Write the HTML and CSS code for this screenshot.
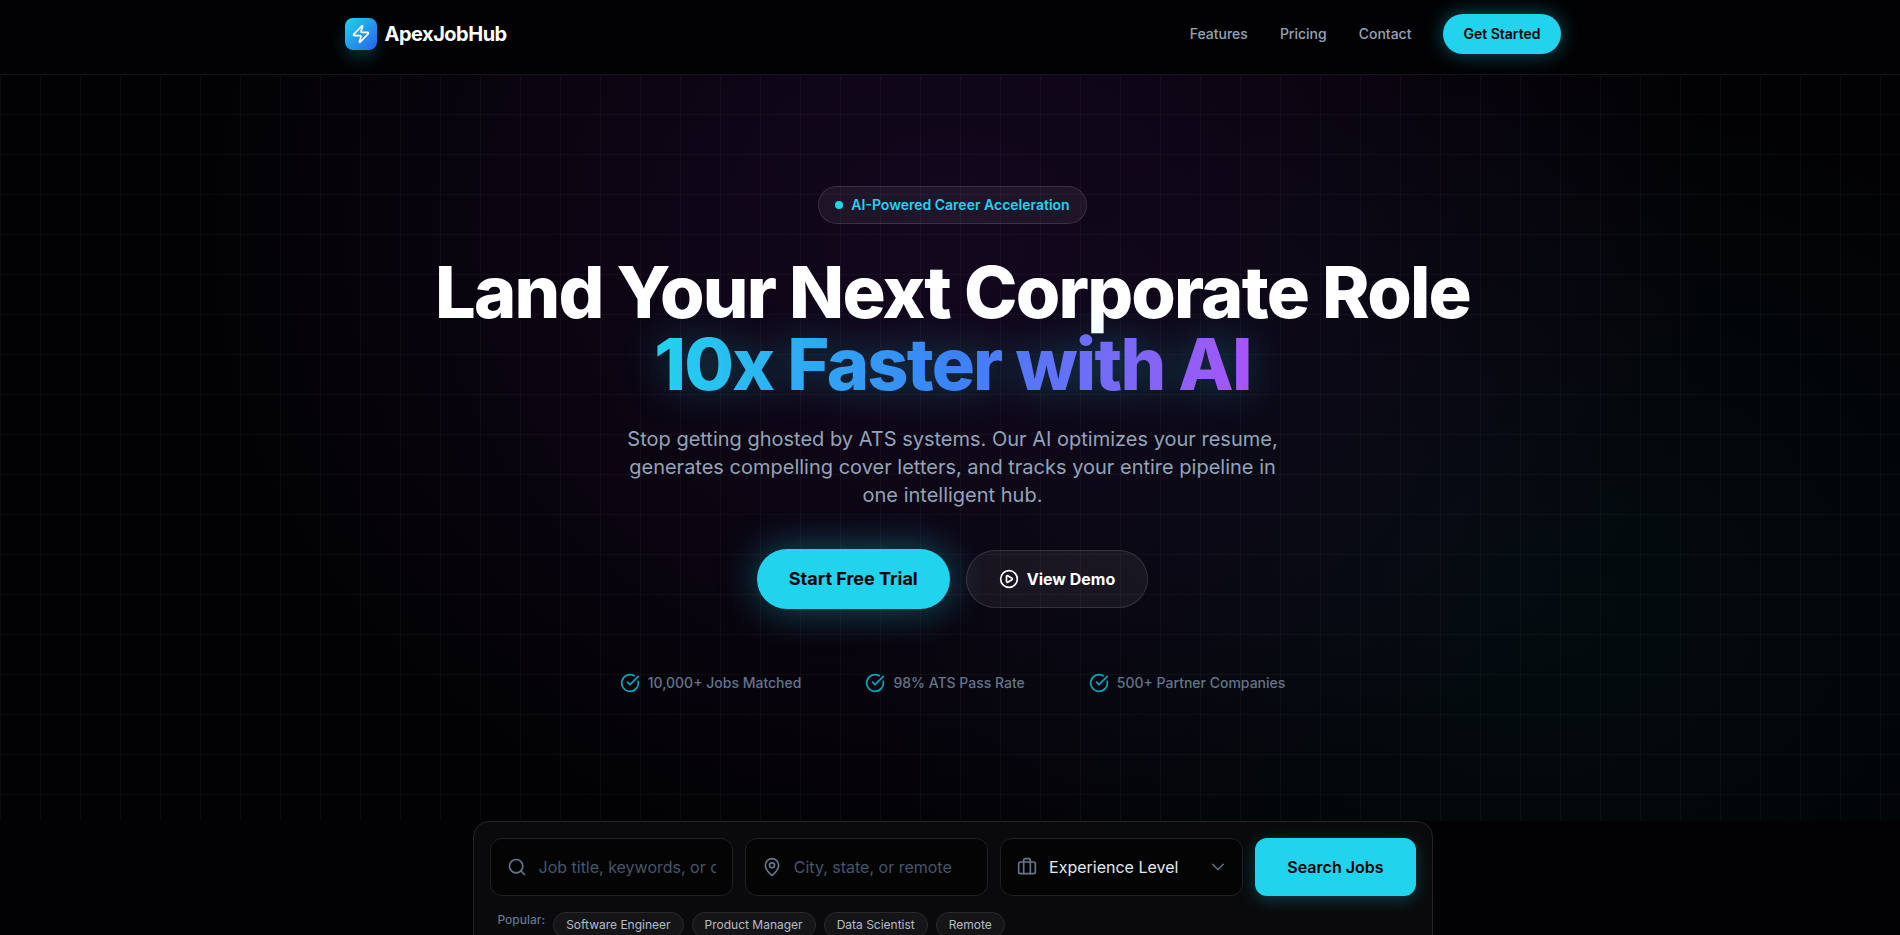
FILE: index.html
```html
<!DOCTYPE html>
<html lang="en">
<head>
  <meta charset="UTF-8" />
  <meta name="viewport" content="width=device-width, initial-scale=1.0"/>
  <title>ApexJobHub</title>
  <link rel="stylesheet" href="styles.css">
</head>
<body>
  <div class="page">
    <header class="header">
      <nav class="nav">
        <a class="logo" href="#">
          <span class="logo-mark">
            <svg class="icon" viewBox="0 0 24 24"><path d="M4 14a1 1 0 0 1-.78-1.63l9.9-10.2a.5.5 0 0 1 .86.46l-1.92 6.02A1 1 0 0 0 13 10h7a1 1 0 0 1 .78 1.63l-9.9 10.2a.5.5 0 0 1-.86-.46l1.92-6.02A1 1 0 0 0 11 14z"/></svg>
          </span>
          ApexJobHub
        </a>
        <div class="nav-links">
          <a href="#features">Features</a>
          <a href="#pricing">Pricing</a>
          <a href="#contact">Contact</a>
          <button class="btn btn-small" type="button">Get Started</button>
        </div>
      </nav>
    </header>

    <main>
      <section class="hero">
        <div class="badge"><span class="badge-dot"></span>AI-Powered Career Acceleration</div>
        <h1 class="hero-title">Land Your Next Corporate Role<br><span class="gradient-text">10x Faster with AI</span></h1>
        <p class="hero-text">Stop getting ghosted by ATS systems. Our AI optimizes your resume, generates compelling cover letters, and tracks your entire pipeline in one intelligent hub.</p>

        <div class="hero-actions">
          <button class="btn btn-large" type="button">Start Free Trial</button>
          <button class="btn btn-glass" type="button">
            <svg class="icon" viewBox="0 0 24 24"><circle cx="12" cy="12" r="10"/><path d="M9 9.003a1 1 0 0 1 1.517-.859l4.997 2.997a1 1 0 0 1 0 1.718l-4.997 2.997A1 1 0 0 1 9 14.996z"/></svg>
            View Demo
          </button>
        </div>

        <ul class="stats">
          <li>
            <svg class="icon" viewBox="0 0 24 24"><path d="M21.801 10A10 10 0 1 1 17 3.335"/><path d="m9 11 3 3L22 4"/></svg>
            10,000+ Jobs Matched
          </li>
          <li>
            <svg class="icon" viewBox="0 0 24 24"><path d="M21.801 10A10 10 0 1 1 17 3.335"/><path d="m9 11 3 3L22 4"/></svg>
            98% ATS Pass Rate
          </li>
          <li>
            <svg class="icon" viewBox="0 0 24 24"><path d="M21.801 10A10 10 0 1 1 17 3.335"/><path d="m9 11 3 3L22 4"/></svg>
            500+ Partner Companies
          </li>
        </ul>
      </section>

      <section class="search-card">
        <form class="search-form">
          <label class="field">
            <svg class="icon" viewBox="0 0 24 24"><circle cx="11" cy="11" r="8"/><path d="m21 21-4.34-4.34"/></svg>
            <input type="text" placeholder="Job title, keywords, or company" aria-label="Job title">
          </label>
          <label class="field">
            <svg class="icon" viewBox="0 0 24 24"><path d="M20 10c0 4.993-5.539 10.193-7.399 11.799a1 1 0 0 1-1.202 0C9.539 20.193 4 14.993 4 10a8 8 0 0 1 16 0"/><circle cx="12" cy="10" r="3"/></svg>
            <input type="text" placeholder="City, state, or remote" aria-label="Location">
          </label>
          <label class="field">
            <svg class="icon" viewBox="0 0 24 24"><path d="M16 20V4a2 2 0 0 0-2-2h-4a2 2 0 0 0-2 2v16"/><rect x="2" y="6" width="20" height="14" rx="2"/></svg>
            <select aria-label="Experience level">
              <option>Experience Level</option>
              <option>Entry Level</option>
              <option>Mid Level</option>
              <option>Senior</option>
            </select>
            <svg class="icon chevron" viewBox="0 0 24 24"><path d="m4 8 8 8 8-8"/></svg>
          </label>
          <button class="btn btn-search" type="submit">Search Jobs</button>
        </form>

        <div class="popular">
          <span>Popular:</span>
          <button class="chip" type="button">Software Engineer</button>
          <button class="chip" type="button">Product Manager</button>
          <button class="chip" type="button">Data Scientist</button>
          <button class="chip" type="button">Remote</button>
        </div>
      </section>
    </main>
  </div>
</body>
</html>
```

FILE: styles.css
```css
* { box-sizing: border-box; }
body { margin: 0; background: #020204; color: #fff; font-family: Inter, "Liberation Sans", sans-serif; font-size: 16px; line-height: 24px; overflow-x: hidden; }
a { color: inherit; text-decoration: none; }
button, input, select { font: inherit; }
button { cursor: pointer; }

/* the page runs on under the edge of the scrollbar */
.page { margin-right: -5px; }

.icon { width: 20px; height: 20px; flex: none; fill: none; stroke: currentColor; stroke-width: 2; stroke-linecap: round; stroke-linejoin: round; }

/* Header */
.header { border-bottom: 1px solid #151518; background: #020204; }
.nav { display: flex; justify-content: space-between; align-items: center; max-width: 1280px; margin: 0 auto; padding: 14px 32px 20px; }
.logo { display: flex; align-items: center; gap: 8px; font-size: 20px; font-weight: 700; letter-spacing: -0.025em; }
.logo-mark { display: flex; align-items: center; justify-content: center; width: 32px; height: 32px; border-radius: 8px; background: linear-gradient(135deg, #22d3ee, #2563eb); box-shadow: 0 8px 16px rgba(34, 211, 238, 0.2); }
.nav-links { display: flex; align-items: center; gap: 32px; color: #94a3b8; font-size: 14px; font-weight: 500; }

/* Buttons */
.btn { display: flex; align-items: center; justify-content: center; gap: 8px; border: 0; border-radius: 999px; background: #22d3ee; color: #020204; font-weight: 700; }
.btn-small { height: 40px; padding: 0 20px; font-size: 14px; font-weight: 600; box-shadow: 0 0 20px rgba(34, 211, 238, 0.4); }
.btn-large { height: 60px; padding: 0 32px; font-size: 18px; box-shadow: 0 0 40px rgba(34, 211, 238, 0.4); }
.btn-glass { height: 58px; padding: 0 32px; border: 1px solid rgba(255, 255, 255, 0.12); background: rgba(255, 255, 255, 0.06); color: #fff; }
.btn-search { padding: 0 32px; border-radius: 12px; font-weight: 600; box-shadow: 0 4px 16px rgba(34, 211, 238, 0.25); }

/* Hero */
.hero {
  display: flex; flex-direction: column; align-items: center; padding: 111px 32px 128px; text-align: center;
  background:
    linear-gradient(to right, rgba(255, 255, 255, 0.03) 1px, transparent 1px) 0 0 / 40px 40px,
    linear-gradient(to bottom, rgba(255, 255, 255, 0.03) 1px, transparent 1px) 0 -1px / 40px 40px,
    radial-gradient(ellipse 760px 640px at 50% 22%, rgba(88, 28, 135, 0.2), rgba(88, 28, 135, 0.11) 50%, transparent),
    radial-gradient(ellipse 680px 520px at 80% 70%, rgba(14, 95, 110, 0.1), transparent);
}
.badge { display: flex; align-items: center; gap: 8px; height: 38px; padding: 0 16px; border: 1px solid rgba(255, 255, 255, 0.12); border-radius: 999px; background: rgba(255, 255, 255, 0.06); color: #22d3ee; font-size: 14px; font-weight: 600; }
.badge-dot { width: 8px; height: 8px; border-radius: 50%; background: #22d3ee; }
.hero-title { margin: 32px 0 25px; font-size: 72px; line-height: 72px; font-weight: 800; letter-spacing: -0.025em; }
.gradient-text { background: linear-gradient(to right, #22d3ee, #3b82f6, #a855f7); -webkit-background-clip: text; background-clip: text; color: transparent; filter: drop-shadow(0 0 20px rgba(34, 211, 238, 0.3)); }
.hero-text { max-width: 672px; margin: 0 0 40px; color: #94a3b8; font-size: 20px; line-height: 28px; }
.hero-actions { display: flex; align-items: center; gap: 16px; }
.stats { display: flex; gap: 64px; margin: 64px 0 0; padding: 0; list-style: none; color: #64748b; font-size: 14px; line-height: 20px; font-weight: 500; }
.stats li { display: flex; align-items: center; gap: 8px; }
.stats .icon { color: #0da5bd; }

/* Search */
.search-card { max-width: 960px; margin: 0 auto 64px; padding: 16px; border: 1px solid #242427; border-radius: 16px; background: #0a0a0c; }
.search-form { display: flex; gap: 12px; }
.field { display: flex; align-items: center; gap: 12px; flex: 1; min-width: 0; height: 58px; padding: 0 16px; border: 1px solid #202022; border-radius: 12px; background: #040405; color: #64748b; }
.field input, .field select { flex: 1; min-width: 0; width: 0; padding: 0; border: 0; outline: 0; background: transparent; color: #e2e8f0; }
.field input::placeholder { color: #475569; }
.field select { appearance: none; }
.field .chevron { width: 16px; height: 16px; }
.popular { display: flex; align-items: flex-start; gap: 8px; margin-top: 16px; padding: 0 8px; color: #64748b; font-size: 12px; line-height: 16px; font-weight: 500; }
.chip { padding: 4px 12px; border: 1px solid #2a2a2d; border-radius: 999px; background: #151518; color: #b4bdca; font-weight: 400; }
```
